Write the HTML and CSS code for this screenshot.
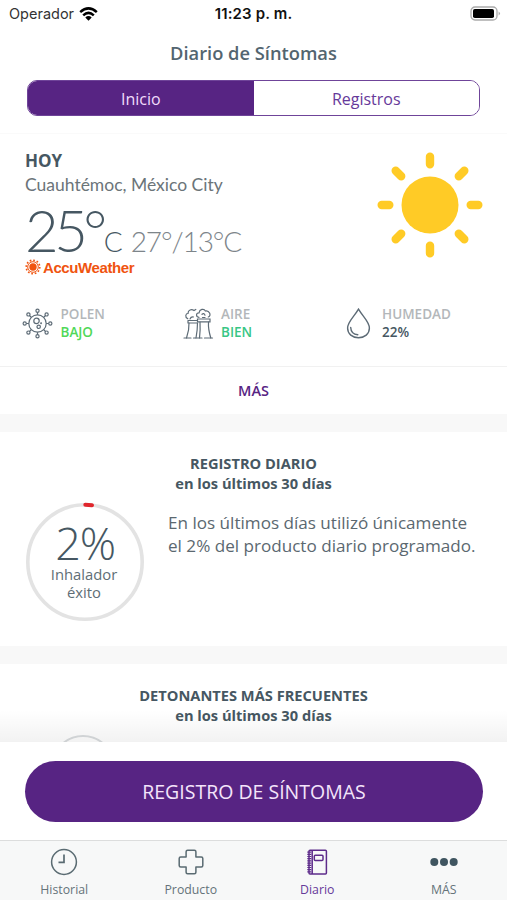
FILE: index.html
```
<!DOCTYPE html>
<html lang="es">
<head>
    <meta charset="UTF-8">
    <meta name="viewport" content="width=device-width, initial-scale=1.0">
    <title>Diario de Síntomas</title>
    <link rel="stylesheet" href="styles.css">
</head>
<body>
    <div class="app">
        <div class="status-bar">
            <div class="status-carrier">
                <span class="carrier-name">Operador</span>
                <svg class="wifi-icon" width="19" height="14" viewBox="0 0 19 14">
                    <g fill="none" stroke="#000" stroke-width="2.5">
                        <path d="M1.2 5.2Q9.5 -2.4 17.8 5.2"/>
                        <path d="M4.2 8.3Q9.5 3.4 14.8 8.3"/>
                    </g>
                    <path d="M6.3 10.4Q9.5 7.8 12.7 10.4L9.5 13.7Z"/>
                </svg>
            </div>
            <span class="status-time">11:23 p. m.</span>
            <svg class="battery-icon" width="31" height="15" viewBox="0 0 31 15">
                <rect x="1" y="1" width="26" height="13" rx="4" fill="#fff" stroke="#aaa" stroke-width="1.3"/>
                <rect x="3" y="3" width="21" height="9" rx="1.8"/>
                <path d="M28.6 5.5Q31.4 7.5 28.6 9.5Z" fill="#aaa"/>
            </svg>
        </div>

        <h1 class="page-title">Diario de Síntomas</h1>

        <div class="segmented">
            <button class="segment active">Inicio</button>
            <button class="segment">Registros</button>
        </div>

        <main class="content">
            <!-- Clima -->
            <section class="weather">
                <div class="weather-main">
                    <div class="weather-info">
                        <div class="weather-day">HOY</div>
                        <div class="weather-city">Cuauhtémoc, México City</div>
                        <div class="weather-temp">
                            <span class="temp-now">25°</span>
                            <span class="temp-unit">C</span>
                            <span class="temp-range">27°/13°C</span>
                        </div>
                        <div class="accuweather">
                            <svg width="16" height="16" viewBox="0 0 16 16" fill="none" stroke="#f0540f">
                                <circle cx="8" cy="8" r="3.7" fill="#f0540f" stroke="none"/>
                                <circle cx="8" cy="8" r="5.3" stroke-width="1"/>
                                <circle cx="8" cy="8" r="6.8" stroke-width="1.6" stroke-dasharray="1.7 1.86"/>
                            </svg>
                            <span class="accuweather-name">AccuWeather</span>
                        </div>
                    </div>
                    <svg class="sun-icon" width="106" height="106" viewBox="-53 -53 106 106">
                        <circle r="28.5" fill="#ffcb26"/>
                        <g stroke="#ffcb26" stroke-width="8.4" stroke-linecap="round">
                            <path d="M0-48.3V-40.7M0 40.7V48.3M-48.3 0H-40.7M40.7 0H48.3"/>
                            <path d="M-34.3-34.3L-28.8-28.8M34.3-34.3L28.8-28.8M-34.3 34.3L-28.8 28.8M34.3 34.3L28.8 28.8"/>
                        </g>
                    </svg>
                </div>

                <div class="conditions">
                    <div class="condition">
                        <svg class="condition-icon" width="31" height="31" viewBox="-15.5 -15.5 31 31" fill="none" stroke="#5d6b76" stroke-width="1.2">
                            <circle r="8.7"/>
                            <path d="M0-8.7V-11.2M0 8.7V11.2M-8.7 0H-11.2M8.7 0H11.2M-6.2-6.2L-8-8M6.2-6.2L8-8M-6.2 6.2L-8 8M6.2 6.2L8 8"/>
                            <circle cy="-12.8" r="1.6"/>
                            <circle cy="12.8" r="1.6"/>
                            <circle cx="-12.8" r="1.6"/>
                            <circle cx="12.8" r="1.6"/>
                            <circle cx="-9.1" cy="-9.1" r="1.6"/>
                            <circle cx="9.1" cy="-9.1" r="1.6"/>
                            <circle cx="-9.1" cy="9.1" r="1.6"/>
                            <circle cx="9.1" cy="9.1" r="1.6"/>
                            <circle cx="-1" cy="-2.6" r="2.7"/>
                            <circle cx="1.2" cy="3.3" r="1.7"/>
                            <circle cx="3.6" cy="-.2" r=".4"/>
                        </svg>
                        <div>
                            <div class="condition-label">POLEN</div>
                            <div class="condition-value low">BAJO</div>
                        </div>
                    </div>
                    <div class="condition">
                        <svg class="condition-icon" width="31" height="31" viewBox="0 0 31 31" fill="none" stroke="#5d6b76" stroke-width="1.2" stroke-linecap="round">
                            <path d="M1 30H8M10.5 30H19M21.5 30H29.5"/>
                            <path d="M3.5 30Q6.3 22 6 15M13 30Q14.5 22 14.5 15M16.5 30Q17.5 22 17 14M27.8 30Q25 21 25.5 14"/>
                            <path d="M5 12.5H14M5 15H14M5 12.5V15M14.5 11H27V13.8H14.5Z"/>
                            <path d="M4.8 10.8C1.5 9 2.7 5.5 5 5.5C5 2 8.5.8 11 2.5L12.8 1.5M7 11Q8 8.5 10.5 9M16 9.3C12.5 9 13 4.6 16 4.8C16.6 1 21 .2 22.4 3C26 2 29 7.5 25.3 9M19 6.3Q21 4.6 22 7.2M19.5 9.5H22"/>
                        </svg>
                        <div>
                            <div class="condition-label">AIRE</div>
                            <div class="condition-value good">BIEN</div>
                        </div>
                    </div>
                    <div class="condition">
                        <svg class="condition-icon" width="31" height="31" viewBox="0 0 31 31" fill="none" stroke="#5d6b76" stroke-width="1.4" stroke-linecap="round">
                            <path d="M14.5 1.2C18.6 8.3 25.4 13.8 25.4 20C25.4 26 20.6 29.7 14.5 29.7S3.6 26 3.6 20C3.6 13.8 10.4 8.3 14.5 1.2Z"/>
                            <path d="M6.7 19.5C6.9 23.5 9.7 26.4 13.8 26.7"/>
                        </svg>
                        <div>
                            <div class="condition-label">HUMEDAD</div>
                            <div class="condition-value">22%</div>
                        </div>
                    </div>
                </div>
            </section>

            <a class="more-link">MÁS</a>

            <!-- Registro diario -->
            <section class="card daily">
                <h2 class="card-title">REGISTRO DIARIO<br>en los últimos 30 días</h2>
                <div class="daily-body">
                    <div class="progress-ring">
                        <svg class="ring" width="120" height="120" viewBox="-60 -60 120 120" fill="none">
                            <circle r="57.2" stroke="#e3e3e3" stroke-width="3.6"/>
                            <path d="M.3-57.2A57.2 57.2 0 0 1 7-56.8" stroke="#e0262c" stroke-width="4" stroke-linecap="round"/>
                        </svg>
                        <div class="ring-value">2%</div>
                        <div class="ring-label">Inhalador<br>éxito</div>
                    </div>
                    <p class="daily-text">En los últimos días utilizó únicamente<br>el 2% del producto diario programado.</p>
                </div>
            </section>

            <!-- Detonantes -->
            <section class="card triggers">
                <h2 class="card-title">DETONANTES MÁS FRECUENTES<br>en los últimos 30 días</h2>
                <div class="trigger-circle"></div>
            </section>
        </main>

        <div class="action-bar">
            <button class="log-button">REGISTRO DE SÍNTOMAS</button>
        </div>

        <nav class="tab-bar">
            <a class="tab">
                <svg width="28" height="28" viewBox="0 0 28 28" fill="none" stroke="#5a6b72" stroke-width="1.5">
                    <circle cx="14" cy="14" r="12.4"/>
                    <path d="M14 6.5V14.3H8.5" stroke-width="1.7"/>
                </svg>
                <span>Historial</span>
            </a>
            <a class="tab">
                <svg width="28" height="28" viewBox="0 0 28 28" fill="none" stroke="#5a6b72" stroke-width="1.5" stroke-linejoin="round">
                    <path d="M10.6 2.2H17.4Q18.9 2.2 18.9 3.7V9.1H24.3Q25.8 9.1 25.8 10.6V17.4Q25.8 18.9 24.3 18.9H18.9V24.3Q18.9 25.8 17.4 25.8H10.6Q9.1 25.8 9.1 24.3V18.9H3.7Q2.2 18.9 2.2 17.4V10.6Q2.2 9.1 3.7 9.1H9.1V3.7Q9.1 2.2 10.6 2.2Z"/>
                </svg>
                <span>Producto</span>
            </a>
            <a class="tab active">
                <svg width="28" height="28" viewBox="0 0 28 28" fill="none" stroke="#5d2b8a" stroke-width="1.5">
                    <rect x="6" y="2.3" width="17.4" height="23.6" rx="1"/>
                    <path d="M9.2 2.3V26"/>
                    <path d="M6.3 3.5V25.5" stroke-width="4" stroke-dasharray="1.2 1"/>
                    <rect x="11.3" y="7.3" width="8.7" height="5.2" rx="1"/>
                </svg>
                <span>Diario</span>
            </a>
            <a class="tab">
                <svg width="28" height="28" viewBox="0 0 28 28" fill="#3f5560">
                    <circle cx="4.3" cy="14" r="4"/>
                    <circle cx="14" cy="14" r="4"/>
                    <circle cx="23.7" cy="14" r="4"/>
                </svg>
                <span>MÁS</span>
            </a>
        </nav>
    </div>
</body>
</html>
```

FILE: styles.css
```
* {
    box-sizing: border-box;
}

body {
    margin: 0;
    font-family: "Open Sans", "Noto Sans", sans-serif;
    color: #465762;
    background: #fff;
}

button {
    font-family: inherit;
    border: none;
    padding: 0;
}

.app {
    height: 900px;
    display: flex;
    flex-direction: column;
    overflow: hidden;
}

/* Barra de estado */
.status-bar {
    height: 27px;
    flex: none;
    display: grid;
    grid-template-columns: 1fr auto 1fr;
    align-items: center;
    padding: 0 6px 0 9px;
    font-family: Inter, sans-serif;
    color: #111;
}

.status-carrier {
    display: flex;
    align-items: center;
    gap: 5px;
}

.carrier-name {
    font-size: 14.5px;
    color: #333;
}

.status-time {
    font-size: 15px;
    font-weight: 600;
    letter-spacing: 0.15px;
    margin-left: -3px;
}

.battery-icon {
    justify-self: end;
}

/* Cabecera */
.page-title {
    flex: none;
    height: 53px;
    margin: 0;
    line-height: 52px;
    text-align: center;
    font-size: 18.3px;
    font-weight: 600;
    color: #536570;
}

.segmented {
    flex: none;
    display: flex;
    height: 36px;
    margin: 0 27px 17px;
    border: 1px solid #6f4499;
    border-radius: 10px;
    overflow: hidden;
}

.segment {
    flex: 1;
    padding-top: 2px;
    background: #fff;
    color: #66399a;
    font-size: 16px;
}

.segment.active {
    background: #572483;
    color: #f1dcfb;
}

.content {
    flex: 1;
    min-height: 0;
    overflow: hidden;
    border-top: 1px solid #fafafa;
}

/* Clima */
.weather {
    height: 233px;
    padding: 16px 24px 0 25px;
    border-bottom: 1px solid #f1f1f1;
}

.weather-main {
    display: flex;
    justify-content: space-between;
    height: 155px;
}

.weather-day {
    font-size: 17px;
    font-weight: 700;
    line-height: 22px;
}

.weather-city {
    font-family: Lato, sans-serif;
    font-size: 17.5px;
    line-height: 25px;
    color: #6b7479;
}

.weather-temp {
    display: flex;
    align-items: baseline;
    height: 62px;
    line-height: 66px;
    font-family: Lato, sans-serif;
    font-weight: 300;
}

.temp-now {
    font-size: 58px;
    letter-spacing: -4.5px;
}

.temp-unit {
    margin-left: 1px;
    font-size: 28px;
}

.temp-range {
    margin-left: 8px;
    font-size: 28px;
    letter-spacing: -1.1px;
    color: #7d858a;
}

.accuweather {
    display: flex;
    align-items: center;
    gap: 2px;
    height: 16px;
}

.accuweather-name {
    font-family: "Liberation Sans", sans-serif;
    font-size: 15px;
    font-weight: 700;
    letter-spacing: -0.4px;
    color: #f0540f;
}

.sun-icon {
    margin-top: 2px;
}

.conditions {
    display: grid;
    grid-template-columns: 160.5px 161px 1fr;
    margin-left: -3px;
}

.condition {
    display: flex;
    align-items: center;
    gap: 7.5px;
    font-size: 13.5px;
    line-height: 18px;
}

.condition-label {
    color: #b3b7ba;
    font-weight: 600;
}

.condition-value {
    font-weight: 600;
}

.condition-value.low {
    color: #50d858;
}

.condition-value.good {
    color: #38c685;
}

.more-link {
    display: block;
    height: 47px;
    line-height: 47px;
    text-align: center;
    font-size: 14.5px;
    font-weight: 600;
    color: #572483;
}

/* Tarjetas */
.card {
    border-top: 18px solid #f8f8f8;
    padding-top: 21px;
}

.card-title {
    margin: 0;
    text-align: center;
    font-size: 14.65px;
    line-height: 20px;
    font-weight: 700;
}

.daily {
    height: 232px;
}

.daily-body {
    display: flex;
    gap: 23px;
    padding: 9px 0 0 25px;
}

.progress-ring {
    position: relative;
    width: 120px;
    height: 120px;
    padding-top: 19px;
    text-align: center;
}

.ring {
    position: absolute;
    top: 0;
    left: 0;
}

.ring-value {
    font-size: 45px;
    font-weight: 300;
    line-height: 44px;
    letter-spacing: -1.2px;
}

.ring-label {
    font-size: 14.8px;
    line-height: 18px;
    margin-right: 2px;
    color: #606e76;
}

.daily-text {
    margin: 9px 0 0;
    font-size: 17.1px;
    line-height: 23px;
    color: #5b6870;
}

.triggers {
    height: 200px;
}

.trigger-circle {
    width: 64px;
    height: 64px;
    margin: 10px 0 0 51px;
    border: 2px solid #d9dcde;
    border-radius: 50%;
}

/* Acción principal */
.action-bar {
    position: relative;
    flex: none;
    height: 98px;
    padding: 19px 24px 0 25px;
    background: #fff;
}

.action-bar::before {
    content: "";
    position: absolute;
    left: 0;
    right: 0;
    bottom: 100%;
    height: 32px;
    background: linear-gradient(rgba(0, 0, 0, 0), rgba(0, 0, 0, 0.05));
}

.log-button {
    width: 100%;
    height: 61px;
    border-radius: 31px;
    background: #572483;
    color: #f4e4fb;
    font-size: 19.5px;
}

/* Navegación inferior */
.tab-bar {
    flex: none;
    display: grid;
    grid-template-columns: repeat(4, 1fr);
    height: 60px;
    padding: 7px 0 0 1px;
    border-top: 1px solid #dcdddd;
    background: #f7f8f8;
}

.tab {
    display: flex;
    flex-direction: column;
    align-items: center;
    gap: 5px;
    font-size: 12.3px;
    line-height: 17px;
    color: #65737a;
}

.tab.active {
    color: #66399a;
}
```
